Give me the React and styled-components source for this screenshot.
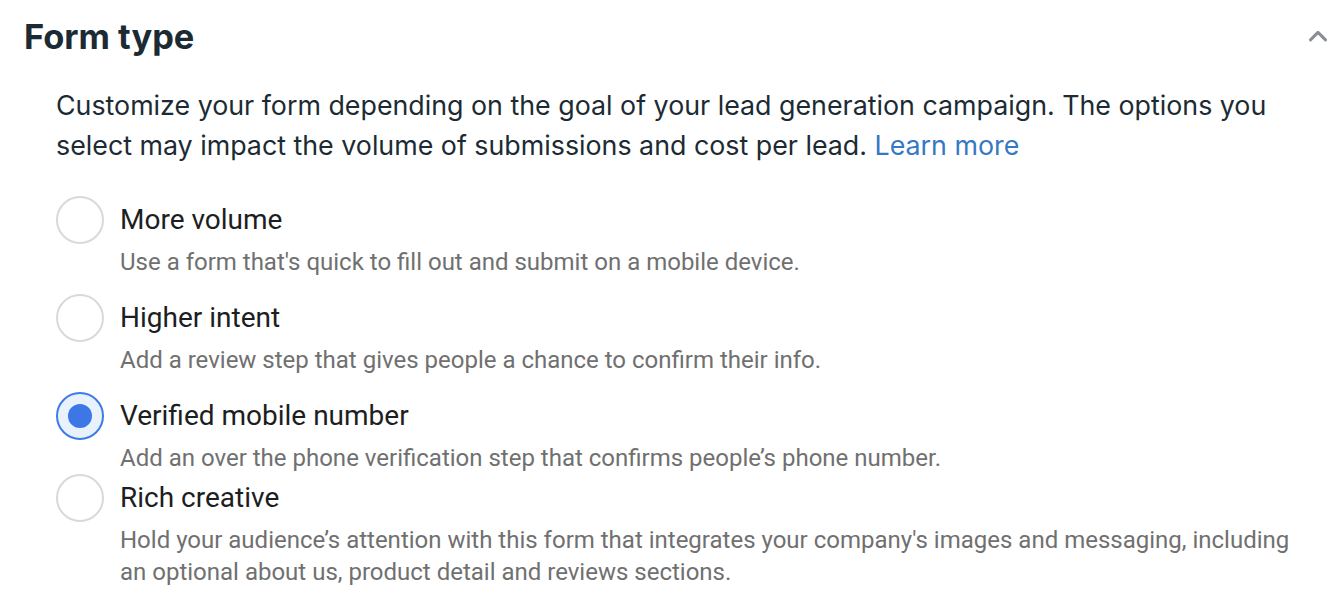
import React, { useState } from 'react'
import styled, { createGlobalStyle } from 'styled-components'

const GlobalStyle = createGlobalStyle`
    body {
        margin: 0;
        background: #ffffff;
        font-family: Inter, "Noto Sans", sans-serif;
    }
`

const options = [
    {
        id: 'volume',
        title: 'More volume',
        text: "Use a form that's quick to fill out and submit on a mobile device.",
        after: 23,
    },
    {
        id: 'intent',
        title: 'Higher intent',
        text: 'Add a review step that gives people a chance to confirm their info.',
        after: 23,
    },
    {
        id: 'verified',
        title: 'Verified mobile number',
        text: 'Add an over the phone verification step that confirms people’s phone number.',
        after: 7,
    },
    {
        id: 'rich',
        title: 'Rich creative',
        text: "Hold your audience’s attention with this form that integrates your company's images and messaging, including an optional about us, product detail and reviews sections.",
        after: 0,
    },
]

export default function App() {
    const [selected, setSelected] = useState('verified')

    return (
        <Section>
            <GlobalStyle />
            <Header>
                <h2>Form type</h2>
                <Chevron viewBox="0 0 16 10" aria-hidden="true">
                    <path d="M2 8.5 L8 2.5 L14 8.5" />
                </Chevron>
            </Header>
            <Body>
                <Intro>
                    Customize your form depending on the goal of your lead generation campaign. The options you
                    select may impact the volume of submissions and cost per lead. <a href="#learn">Learn more</a>
                </Intro>
                <List>
                    {options.map(o => (
                        <Option key={o.id} after={o.after} onClick={() => setSelected(o.id)}>
                            <Radio checked={selected === o.id}>
                                <span />
                            </Radio>
                            <div>
                                <OptionTitle>{o.title}</OptionTitle>
                                <OptionText>{o.text}</OptionText>
                            </div>
                        </Option>
                    ))}
                </List>
            </Body>
        </Section>
    )
}

const Section = styled.div`
    width: 1344px;
    height: 612px;
    overflow: hidden;
    box-sizing: border-box;
    padding: 14px 0 0 24px;
    color: #1c2b33;
`

const Header = styled.div`
    display: flex;
    align-items: center;
    justify-content: space-between;
    padding-right: 16px;

    h2 {
        margin: 0;
        font-size: 34.4px;
        line-height: 46px;
        font-weight: 700;
        letter-spacing: 0;
    }
`

const Chevron = styled.svg`
    width: 20px;
    height: 13px;
    margin-top: -4px;
    fill: none;
    stroke: #8a8d91;
    stroke-width: 2.4;
    stroke-linecap: round;
    stroke-linejoin: round;
`

const Body = styled.div`
    padding: 25px 0 0 32px;
`

const Intro = styled.p`
    margin: 0;
    font-size: 26.8px;
    line-height: 40px;
    width: 1240px;

    a {
        color: #3578c4;
        text-decoration: none;
    }
`

const List = styled.div`
    margin-top: 38px;
    display: flex;
    flex-direction: column;
`

const Option = styled.label`
    display: grid;
    grid-template-columns: 48px 1fr;
    column-gap: 16px;
    align-items: start;
    cursor: pointer;
    margin-bottom: ${p => p.after}px;
    font-family: Roboto, "Noto Sans", sans-serif;
`

const Radio = styled.div`
    width: 48px;
    height: 48px;
    box-sizing: border-box;
    border-radius: 50%;
    margin-top: -7px;
    border: 2px solid ${p => (p.checked ? '#3d7be6' : '#d9d9d9')};
    background: ${p => (p.checked ? '#e9f1fd' : '#ffffff')};
    display: flex;
    align-items: center;
    justify-content: center;

    span {
        display: ${p => (p.checked ? 'block' : 'none')};
        width: 24px;
        height: 24px;
        border-radius: 50%;
        background: #3b77e6;
    }
`

const OptionTitle = styled.div`
    font-size: 28px;
    line-height: 34px;
    color: #1c1e21;
`

const OptionText = styled.div`
    margin-top: 9px;
    font-size: 24px;
    line-height: 32px;
    color: #707070;
    max-width: 1185px;
`
